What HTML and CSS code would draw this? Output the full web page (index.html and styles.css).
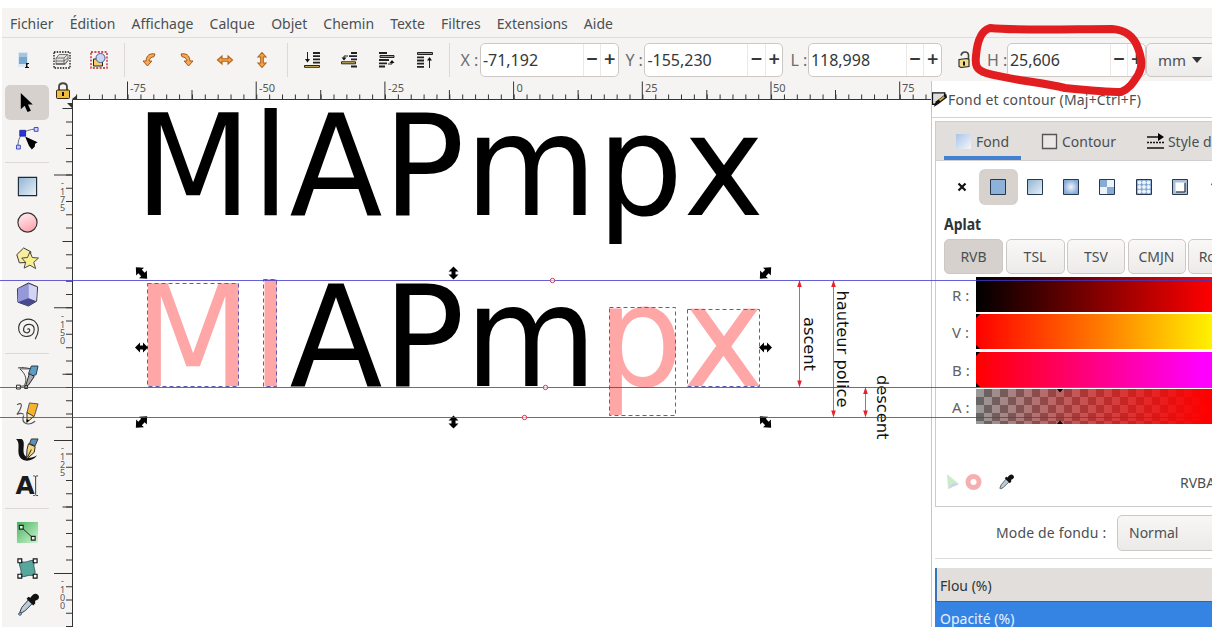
FILE: index.html
```
<!DOCTYPE html>
<html lang="fr">
<head>
<meta charset="utf-8">
<title>Inkscape</title>
<link rel="stylesheet" href="styles.css">
</head>
<body>
<div class="app">
<nav class="menubar">
<span class="t">Fichier</span><span class="t">Édition</span><span class="t">Affichage</span><span class="t">Calque</span><span class="t">Objet</span><span class="t">Chemin</span><span class="t">Texte</span><span class="t">Filtres</span><span class="t">Extensions</span><span class="t">Aide</span>
</nav>
<div class="toolbar">
<div class="icons first">
<svg viewBox="0 0 24 24"><path d="M6 4h10v15H6z" fill="#d9e8f4"/><path d="M7 5h8v11H7z" fill="#79a8cf"/><path d="M7 5h8v4H7z" fill="#a6c6e0"/><path d="M13 15h4v1h-1l-1 1.500 1 1.500h1v1h-4v-1h1v-4h-1z" fill="#111"/></svg>
<svg viewBox="0 0 24 24"><path d="M4 4h16v16H4z" fill="none" stroke="#111" stroke-width="1.300" stroke-dasharray="1.500 1.200"/><path d="M9 6.500h9v6l-3 4H6v-6z" fill="#e4e4e4" stroke="#777"/><path d="M6 10h8l3-3M6 13h8l4-3M6 15.500h9l3-3M14 10v6" fill="none" stroke="#555" stroke-width=".8"/></svg>
<svg viewBox="0 0 24 24"><path d="M4 4h16v16H4z" fill="none" stroke="#c01824" stroke-width="1.300" stroke-dasharray="2 1.400"/><path d="M6.500 11h9v7h-9z" fill="#f3cf63" stroke="#222"/><circle cx="13.500" cy="10" r="4.500" fill="#c8d8f4" stroke="#4b5d94"/></svg>
</div>
<i class="sep s1"></i>
<div class="icons">
<svg viewBox="0 0 24 24"><path id="rot" d="M18 6c-5-1-8.500 1-9 7H6l4.500 5 4.300-5H12c.5-2.500 2-4 5-4.300z" fill="#f2a75a" stroke="#a65a18" stroke-width="1"/></svg>
<svg viewBox="0 0 24 24"><use href="#rot" transform="matrix(-1 0 0 1 24 0)"/></svg>
<svg viewBox="0 0 24 24"><path id="flip" d="M4.500 12l4.500-4v2.700h6V8l4.500 4-4.500 4v-2.700H9V16z" fill="#f7a347" stroke="#b0641d" stroke-width="1.100"/></svg>
<svg viewBox="0 0 24 24"><use href="#flip" transform="rotate(90 12 12)"/></svg>
</div>
<i class="sep"></i>
<div class="icons">
<svg viewBox="0 0 24 24"><path d="M13 5h7M13 8.200h7M13 11.400h7M13 14.600h7" stroke="#222" stroke-width="1.800"/><path d="M7.500 4v10" stroke="#222"/><path d="M5 11h5l-2.500 3.500z" fill="#111"/><path d="M4.500 17.500h15v1.800h-15z" fill="#e8c562" stroke="#222" stroke-width="1"/></svg>
<svg viewBox="0 0 24 24"><path d="M14 5h6M12 8.200h8M14 11.400h6M14 18.500h6" stroke="#222" stroke-width="1.800"/><path d="M4.500 13.800h14v2h-14z" fill="#e8c562" stroke="#222"/><path d="M11 8H7v3" fill="none" stroke="#222"/><path d="M4.500 9.500h5L7 12.500z" fill="#111"/></svg>
<svg viewBox="0 0 24 24"><path d="M4 5h8M4 12h10M4 15.300h8M4 18.500h6" stroke="#222" stroke-width="1.800"/><path d="M5 7.500h14v2H5z" fill="#999" stroke="#222"/><path d="M13 16h4v-3" fill="none" stroke="#222"/><path d="M14.500 15h5L17 12z" fill="#111"/></svg>
<svg viewBox="0 0 24 24"><path d="M4.500 4.500h15v2h-15z" fill="#999" stroke="#222"/><path d="M4 9.300h7M4 12.500h7M4 15.700h7M4 18.900h7" stroke="#222" stroke-width="1.800"/><path d="M16.500 10v10" stroke="#222"/><path d="M14 12.500h5L16.500 9z" fill="#111"/></svg>
</div>
<i class="sep"></i>
<label class="lx">X :</label><div class="spin"><span>-71,192</span><b>−</b><b>+</b></div>
<label class="ly">Y :</label><div class="spin"><span>-155,230</span><b>−</b><b>+</b></div>
<label class="ll">L :</label><div class="spin short"><span>118,998</span><b>−</b><b>+</b></div>
<svg class="lock" viewBox="0 0 16 20"><path d="M5 5.500C6 1 12 1 12.500 5v4" fill="none" stroke="#444" stroke-width="1.600"/><path d="M3 9.500l8-1 2 1v7l-8 1-2-1z" fill="#f2dc88" stroke="#222" stroke-width="1.100"/><path d="M8 11.500v4" stroke="#111" stroke-width="2"/></svg>
<label class="lh">H :</label><div class="spin"><span>25,606</span><b>−</b><b>+</b></div>
<div class="unit"><span>mm</span><i></i></div>
</div>
<div class="main">
<aside class="toolbox">
<div class="tool on"><svg viewBox="0 0 24 24"><path d="M5 2v17l4-3.500 3 6.500 3.500-1.500-3-6.500h5z" fill="#000"/></svg></div>
<div class="tool"><svg viewBox="0 0 24 24"><path d="M2 21C2 9 7 3 21 2" fill="none" stroke="#666"/><path d="M4 3.500h6v6H4z" fill="#2c35cf" stroke="#2227a8"/><path d="M19 .5h4v4h-4zM.5 19h4v4h-4z" fill="#cdd1fa" stroke="#3b43cc"/><path d="M9.500 10l13 6-2.500 1.500-.5 3-3 3-3-4z" fill="#000"/></svg></div>
<i class="hs"></i>
<div class="tool"><svg viewBox="0 0 24 24"><defs><linearGradient id="bl" x2="1" y2="1"><stop stop-color="#8fb4d4"/><stop offset="1" stop-color="#e9f1f8"/></linearGradient><linearGradient id="pk" x2=".4" y2="1"><stop stop-color="#fff3f3"/><stop offset="1" stop-color="#ffa8b4"/></linearGradient></defs><path d="M2.500 2.500h19v19h-19z" fill="url(#bl)" stroke="#1c2a38" stroke-width="1.200"/></svg></div>
<div class="tool"><svg viewBox="0 0 24 24"><circle cx="12" cy="12" r="10" fill="url(#pk)" stroke="#333" stroke-width="1.200"/></svg></div>
<div class="tool"><svg viewBox="0 0 24 24"><path d="M.8 8L8 1l7.500 4-1.500 11-10.500.5z" fill="#f8eda0" stroke="#333"/><path d="M14.500 5l2.500 6 6.500.5-5 4.500 2 6.500-6-3.500-6 3 1.500-6-4-4.500 6-.5z" fill="#faef90" stroke="#444"/></svg></div>
<div class="tool"><svg viewBox="0 0 24 24"><path d="M1.500 6L13 0l9.500 4-1 15L13 24 2 20z" fill="#7a7dcd" stroke="#333"/><path d="M13 1v15l8 3 1-14.500z" fill="#d3d4f2"/><path d="M2 6l11-5v15L2 20z" fill="#9698da"/><path d="M2 20l11-4 8 3-8 4.500z" fill="#474a91"/></svg></div>
<div class="tool"><svg viewBox="0 0 24 24"><path d="M12 12c1-2 3 0 2 2-2 3-7 1-6-3 1-6 11-6 11 1 0 9-14 10-16 1C1 2 13-1 19 3c6 5 5 13 1 19" fill="none" stroke="#333" stroke-width="1.200"/></svg></div>
<i class="hs thin"></i>
<div class="tool"><svg viewBox="0 0 24 24"><path d="M2 2c6-1 8 0 14 1L4 3c7 6 8 13 4 18H2" fill="none" stroke="#444"/><path d="M.5 20h4v4h-4zM9 20.500h3v3H9z" fill="#fff" stroke="#222"/><path d="M16 0h7l-2 9-6 2-2-3z" fill="#5d9cc4" stroke="#283c4a"/><path d="M14 8l5 3-6 9-3 1z" fill="#aaa" stroke="#222"/></svg></div>
<div class="tool"><svg viewBox="0 0 24 24"><path d="M1 3c8-5 4 5 0 10 3-2 6-1 7 0M8 14c-3 8 4 12 12 6" fill="none" stroke="#555" stroke-width="1.200"/><path d="M14 1l9 1-4 13-7 5 .5-1-1-8z" fill="#f7b22f" stroke="#555"/><path d="M11.500 11l7 4-7 6z" fill="#f8eab8" stroke="#333"/><path d="M11 18l3 1-3 3z"/></svg></div>
<div class="tool"><svg viewBox="0 0 24 24"><path d="M0 1h6c5 3-1 14 4 18 4 3 8 1 12-1-4 6-12 7-16 4C-1 16 6 6 0 1z" fill="#111"/><path d="M16 1h7l-3 7-6-2z" fill="#5d91b9" stroke="#333"/><path d="M13 6l7 3-1 6-8 7 .500-10z" fill="#f4d77c" stroke="#222"/><path d="M12 20l4-8" stroke="#222"/></svg></div>
<div class="tool"><svg viewBox="0 0 24 24"><text x="-.5" y="20.500" class="aicon" textLength="20" lengthAdjust="spacingAndGlyphs">A</text><path d="M18 2c2 0 2 0 2.500 1C21 2 21 2 23 2M20.500 3v18M18 22.500c2 0 2 0 2.500-1 .5 1 .5 1 2.500 1" fill="none" stroke="#333"/></svg></div>
<i class="hs"></i>
<div class="tool"><svg viewBox="0 0 24 24"><defs><linearGradient id="gr" x2="1" y2="1"><stop stop-color="#45b45c"/><stop offset="1" stop-color="#d3f3d6"/></linearGradient></defs><path d="M1 1h22v22H1z" fill="url(#gr)"/><path d="M6 7l12 11" stroke="#222"/><path d="M3.500 4.500h4v4h-4zM16 16h4v4h-4z" fill="#e5f5e5" stroke="#222" stroke-width="1.200"/></svg></div>
<div class="tool"><svg viewBox="0 0 24 24"><path d="M4 4c6 4 10-2 16 0-4 7 2 9-1 16-6-3-9 2-15 0 4-6-2-10 0-16z" fill="#58a79c" stroke="#2f5c66"/><path d="M2 2h4v4H2zM18 2h4v4h-4zM18 18h4v4h-4zM2 18h4v4H2z" fill="#fff" stroke="#111" stroke-width="1.200"/></svg></div>
<div class="tool"><svg viewBox="0 0 24 24"><g id="drop"><path d="M13 7l4 4-8 8-4 2-1-1 2-5z" fill="#b8cbd9" stroke="#333"/><path d="M11 6l2-2 2 1c3-5 6-5 8-3s1 5-3 6l0 3-2 2z" fill="#111"/></g><path d="M5 20c3 4-4 4-2 1z" fill="#7fb0d8" stroke="#357"/></svg></div>
</aside>
<svg class="canvas" width="877" height="546" viewBox="54 81 877 546">
<rect x="54" y="81" width="877" height="546" fill="#f5f4f2"/>
<rect x="72" y="99" width="859" height="528" fill="#fff"/>
<g stroke="#333" fill="none">
<path d="M72.500 627V99.500H931"/>
<path d="M76 97H931" stroke-width="5" stroke-dasharray="1 11.870" stroke-dashoffset="-.1"/>
<path d="M191.500 94.500H931" stroke-width="9" stroke-dasharray="1 127.700"/>
<path d="M127 90.500H931" stroke-width="18" stroke-dasharray="1 127.700"/>
<path d="M69 108.100V627" stroke-width="6" stroke-dasharray="1 12.280"/>
<path d="M67.500 108.100V627" stroke-width="10" stroke-dasharray="1 131.800"/>
<path d="M63 174.500V627" stroke-width="18" stroke-dasharray="1 131.800"/>
</g>
<path d="M72 99l5-4v5zM67 103h5v5z" fill="#333"/>
<path d="M59 90v-3c0-5 8-5 8 0v3" fill="none" stroke="#444" stroke-width="1.800"/><rect x="56.500" y="90" width="13" height="8.500" rx="1" fill="#f0bd3d" stroke="#33250f"/><path d="M63 92v4" stroke="#111" stroke-width="2"/>
<g class="rl">
<text x="130" y="92">-75</text><text x="259" y="92">-50</text><text x="388" y="92">-25</text><text x="516.500" y="92">0</text><text x="645" y="92">25</text><text x="773" y="92">50</text><text x="902" y="92">75</text>
</g>
<g class="vl">
<text><tspan x="61" y="186">-</tspan><tspan x="60" y="194.500">1</tspan><tspan x="60" y="203">7</tspan><tspan x="60" y="211">5</tspan></text>
<text><tspan x="61" y="319">-</tspan><tspan x="60" y="327.500">1</tspan><tspan x="60" y="336">5</tspan><tspan x="60" y="344">0</tspan></text>
<text><tspan x="61" y="451">-</tspan><tspan x="60" y="459.500">1</tspan><tspan x="60" y="468">2</tspan><tspan x="60" y="476">5</tspan></text>
<text><tspan x="61" y="584">-</tspan><tspan x="60" y="592.500">1</tspan><tspan x="60" y="601">0</tspan><tspan x="60" y="609">0</tspan></text>
</g>
<g class="big">
<text transform="translate(134.500 215.300) scale(1 1.033)">MlAPmpx</text>
<text transform="translate(134.500 386.300) scale(1 1.033)"><tspan class="pk">Ml</tspan>APm<tspan class="pk">px</tspan></text>
</g>
<g fill="none" stroke="#5f5cae" stroke-dasharray="4 3"><path d="M147.500 283.500h91v103h-91zM263.500 279.500h13v107h-13zM609.500 307.500h66v108h-66zM687.500 309.500h72v77h-72z"/></g>
<defs><path id="ar" d="M-6.500 0l5-5v3h3v-3l5 5-5 5V2h-3v3z"/><path id="dg" d="M-8 0l6-5.500v3h4v-3L8 0 2 5.500v-3h-4v3z"/></defs>
<use href="#dg" transform="translate(141.500 273) rotate(45)"/><use href="#dg" transform="translate(765.500 273) rotate(-45)"/><use href="#dg" transform="translate(141.500 422) rotate(-45)"/><use href="#dg" transform="translate(765.500 422) rotate(45)"/>
<use href="#ar" transform="translate(453.500 273) rotate(90)"/><use href="#ar" transform="translate(453.500 422) rotate(90)"/><use href="#ar" x="141.500" y="347.500"/><use href="#ar" x="765.500" y="347.500"/>
<g stroke="#ee5555"><path d="M799.500 282v104M833.500 282v134M865.500 389v27"/></g>
<path fill="#e3232a" d="M799.500 280l2.300 7h-4.600zM833.500 280l2.300 7h-4.600zM865.500 387l2.300 7h-4.600zM799.500 387.500l2.300-7h-4.600zM833.500 417.500l2.300-7h-4.600zM865.500 417.500l2.300-7h-4.600z"/>
<g class="note">
<text transform="translate(804 317) rotate(90)" textLength="54">ascent</text>
<text transform="translate(837 290.500) rotate(90)" textLength="117">hauteur police</text>
<text transform="translate(877 375) rotate(90)" textLength="64.500">descent</text>
</g>
</svg>
<section class="panel">
<header><svg viewBox="0 0 18 18"><path d="M1.500 2h13v3l-9 9h-4z" fill="#ddd" stroke="#111" stroke-width="1.500"/><path d="M16 3l1 4-8 6-6 4 2-6z" fill="#111"/><path d="M9 10l5-4" stroke="#d9a33a" stroke-width="2"/></svg><span class="t">Fond et contour (Maj+Ctrl+F)</span></header>
<div class="book">
<div class="tabs">
<div class="tab cur"><svg viewBox="0 0 17 17"><defs><linearGradient id="fd" x2="1" y2="1"><stop stop-color="#a9c4e8"/><stop offset="1" stop-color="#f5f6f9"/></linearGradient></defs><path d="M1 1h15v15H1z" fill="url(#fd)"/></svg><span class="t">Fond</span></div>
<div class="tab c2"><svg viewBox="0 0 17 17"><path d="M1.500 1.500h14v14h-14z" fill="#eae7e5" stroke="#555" stroke-width="1.300"/></svg><span class="t">Contour</span></div>
<div class="tab c3"><svg viewBox="0 0 17 17"><path d="M0 4h13M0 15h17" stroke="#111" stroke-width="1.600"/><path d="M0 9.500h17" stroke="#111" stroke-width="1.500" stroke-dasharray="2 1"/><path d="M11 0l6 4-6 4z"/></svg><span class="t">Style du contour</span></div>
</div>
<div class="paints">
<span><svg viewBox="0 0 18 18"><path d="M5.500 5.500l7 7M12.500 5.500l-7 7" stroke="#111" stroke-width="2.200"/></svg></span>
<span class="sel"><svg viewBox="0 0 18 18"><path d="M1.500 1.500h15v15h-15z" fill="#8eb1da" stroke="#26384f"/></svg></span>
<span><svg viewBox="0 0 18 18"><path d="M1.500 1.500h15v15h-15z" fill="url(#bl)" stroke="#26384f"/></svg></span>
<span><svg viewBox="0 0 18 18"><defs><radialGradient id="rd"><stop stop-color="#f2f6fc"/><stop offset="1" stop-color="#85abd8"/></radialGradient></defs><path d="M1.500 1.500h15v15h-15z" fill="url(#rd)" stroke="#26384f"/></svg></span>
<span><svg viewBox="0 0 18 18"><path d="M1.500 1.500h15v15h-15z" fill="#eef3fa"/><path d="M2 2h7v7h7v7H9V9H2z" fill="#88abd2"/><path d="M1.500 1.500h15v15h-15z" fill="none" stroke="#26384f"/></svg></span>
<span><svg viewBox="0 0 18 18"><path d="M1.500 1.500h15v15h-15z" fill="#7fa5d0" stroke="#26384f"/><g fill="#edf3fb"><circle cx="4.500" cy="4.500" r="2"/><circle cx="9" cy="4.500" r="2"/><circle cx="13.500" cy="4.500" r="2"/><circle cx="4.500" cy="9" r="2"/><circle cx="9" cy="9" r="2"/><circle cx="13.500" cy="9" r="2"/><circle cx="4.500" cy="13.500" r="2"/><circle cx="9" cy="13.500" r="2"/><circle cx="13.500" cy="13.500" r="2"/></g></svg></span>
<span><svg viewBox="0 0 18 18"><path d="M1.500 1.500h15v15h-15z" fill="#a9bfda" stroke="#26384f"/><path d="M4.500 4.500h9v9h-9z" fill="#fff"/><path d="M5 14h9V5" fill="none" stroke="#222"/></svg></span>
<span class="q">?</span>
</div>
<div class="aplat t">Aplat</div>
<div class="modes"><span class="m1"><i class="t">RVB</i></span><span class="m2"><i class="t">TSL</i></span><span class="m3"><i class="t">TSV</i></span><span class="m4"><i class="t">CMJN</i></span><span class="m5"><i class="t">Roue</i></span></div>
<div class="chan"><span>R :</span><div class="r"></div></div>
<div class="chan"><span>V :</span><div class="v"><svg class="mk" viewBox="0 0 6 35"><path d="M0 0h4L0 4zM0 35h4l-4-4z"/></svg></div></div>
<div class="chan"><span>B :</span><div class="b"><svg class="mk" viewBox="0 0 6 35"><path d="M0 0h4L0 4zM0 35h4l-4-4z"/></svg></div></div>
<div class="chan"><span>A :</span><div class="a"><svg class="mk mid" viewBox="0 0 6 35"><path d="M0 0h6L3 3.500zM0 35h6l-3-3.500z"/></svg></div></div>
<div class="foot"><svg class="cms" viewBox="0 0 38 18"><path d="M2 1l12 10L3 16z" fill="#cbeccb"/><path d="M3 16l5-6 6 1z" fill="#d0cdf5"/><circle cx="28.500" cy="9" r="5.500" fill="none" stroke="#f4b0b0" stroke-width="5"/></svg><svg class="pick" viewBox="0 0 24 24"><use href="#drop"/></svg><span class="t rvba">RVBA :</span></div>
</div>
<div class="blend"><span class="t">Mode de fondu :</span><div class="combo"><span class="t">Normal</span></div></div>
<div class="blur"><span class="t">Flou (%)</span></div>
<div class="opac"><span class="t">Opacité (%)</span></div>
</section>
</div>
<svg class="over" width="1213" height="627" viewBox="0 0 1213 627">
<g stroke="#3d3acb" stroke-width="1" opacity=".8"><path d="M0 280.500h1212M0 387.500h1212M0 417.500h1212"/></g>
<g fill="#fff" fill-opacity=".6" stroke="#d4395a"><circle cx="552.500" cy="280.500" r="2.200"/><circle cx="545.500" cy="387.500" r="2.200"/><circle cx="524.500" cy="417.500" r="2.200"/></g>
<path d="M990 28C1020 31 1075 29 1112 29C1127 30 1134 37 1138 48C1142 59 1143 67 1138 75C1133 83 1129 89 1121 92C1105 92 1085 90 1065 88C1040 82 1010 80 986 73C976 70 975 65 976 56C977 43 980 31 990 28Z" fill="none" stroke="#e21d20" stroke-width="8" stroke-linejoin="round"/>
</svg>
</div>
</body>
</html>
```
FILE: styles.css
```
* { box-sizing: border-box; }
body { margin: 0; background: #fff; font-family: "Noto Sans", sans-serif; font-size: 14px; color: #4b4f51; overflow: hidden; }
.app { position: relative; width: 1212px; height: 627px; padding: 8px 0 0 2px; overflow: hidden; }
.t { display: inline-block; white-space: nowrap; font-style: normal; transform: scaleY(1.08); }
.menubar { height: 30px; display: flex; align-items: center; gap: 16.100px; padding: 1px 0 0 8px; background: #f5f4f3; border-bottom: 1px solid #dfdcda; }
.toolbar { height: 43px; display: flex; align-items: center; background: #f5f4f2; }
.toolbar > * { flex: none; }
.icons { display: flex; gap: 13.800px; margin-left: 12px; }
.icons.first { margin-left: 10px; gap: 13.500px; }
.icons svg { width: 24px; height: 24px; }
.sep { width: 1px; height: 34px; background: #dcd9d6; margin-left: 12.300px; }
.sep.s1 { margin-left: 13px; }
.toolbar label { font-size: 16px; color: #6b6d6e; white-space: nowrap; }
.lx { width: 29.500px; padding-left: 10px; }
.ly { width: 25.500px; padding-left: 6.500px; }
.ll { width: 24.500px; padding-left: 7px; }
.lh { width: 35px; padding-left: 15px; }
.spin { width: 139px; height: 34px; display: flex; border: 1px solid #cdc8c4; border-radius: 5px; background: #fff; font-size: 16px; line-height: 32px; color: #333839; }
.spin.short { width: 134px; }
.spin span { flex: 1; padding-left: 2px; }
.spin b { width: 17.500px; border-left: 1px solid #ebe9e7; font-weight: 600; font-size: 20px; text-align: center; line-height: 29px; }
.lock { width: 16px; height: 20px; margin-left: 14px; }
.unit { width: 76px; height: 34px; border: 1px solid #cdc8c4; border-radius: 5px; background: linear-gradient(#f8f7f6, #eeeceb); display: flex; align-items: center; padding-left: 11px; gap: 6px; font-size: 15px; }
.unit i { border: 5px solid transparent; border-top: 6px solid #333; border-bottom: 0; }
.main { height: 546px; display: grid; grid-template-columns: 52px 877px 281px; }
.toolbox { background: #f5f4f2; padding-top: 4px; display: flex; flex-direction: column; align-items: center; }
.tool { flex: none; width: 44px; height: 35.800px; display: flex; align-items: center; justify-content: center; border-radius: 5px; margin-right: 2px; }
.tool.on { height: 35px; margin-bottom: 1px; background: #d6d1cd; }
.tool svg { width: 23px; height: 23px; overflow: visible; }
.hs { flex: none; width: 44px; height: 1px; margin: 5px 2px 6px 0; background: #dcd9d6; }
.hs.thin { margin: 5px 2px 6px 0; }
.aicon { font: bold 25px "DejaVu Sans", sans-serif; fill: #1b1b1b; }
.canvas { display: block; }
.rl { font: 11px "Noto Sans", sans-serif; fill: #555; }
.vl { font: 9px "Noto Sans", sans-serif; fill: #555; }
.big { font: 136px "DejaVu Sans", sans-serif; fill: #000; }
.pk { fill: #ffa6a6; }
.note { font: 16.300px "DejaVu Sans", sans-serif; fill: #111; }
.panel { min-width: 0; overflow: hidden; background: #fff; border-left: 1px solid #c9c6c3; }
.panel header { height: 37px; display: flex; align-items: center; border-bottom: 1px solid #d5d2cf; margin-left: -1px; letter-spacing: .18px; }
.panel header svg { width: 17px; height: 17px; }
.book { margin: 3px 0 0 3px; height: 386px; border: 1px solid #cfcbc8; border-right: 0; overflow: hidden; }
.tabs { height: 39px; display: flex; background: #e1dedb; border-bottom: 1px solid #d2cecb; }
.tab { flex: none; height: 38px; display: flex; align-items: center; gap: 4px; }
.tab svg { width: 17px; height: 17px; }
.cur { width: 77px; margin-left: 8px; padding-left: 11px; border-bottom: 4px solid #4380cf; padding-top: 4px; }
.c2 { margin-left: 20px; }
.c3 { margin-left: 31px; }
.paints { height: 54px; display: flex; align-items: center; padding: 0 0 2px 8px; }
.paints span { flex: none; width: 36.300px; height: 34px; display: flex; align-items: center; justify-content: center; }
.paints svg { width: 18px; height: 18px; }
.paints .sel { border: 1px dashed #aaa39e; outline: 2px solid #d7d2ce; outline-offset: -1px; background: #d7d2ce; border-radius: 5px; }
.paints .q { font-weight: bold; color: #222; padding-right: 4px; }
.aplat { height: 24px; margin-left: 8px; font-weight: bold; line-height: 20px; color: #2e3436; }
.modes { display: flex; gap: 2.500px; margin-left: 8px; height: 35px; }
.modes span { flex: none; height: 35px; border: 1px solid #cdc8c4; border-radius: 5px; background: linear-gradient(#f9f8f7, #edebe9); display: flex; align-items: center; justify-content: center; }
.modes .m1 { width: 59px; background: #d6d1cd; }
.m2 { width: 59px; }
.m3 { width: 58px; }
.m4 { width: 58px; }
.m5 { width: 55px; }
.chan { display: flex; margin-top: 2.500px; height: 35px; font-size: 15px; }
.chan span { width: 40px; padding: 8px 0 0 16px; line-height: 20px; white-space: nowrap; flex: none; color: #606263; }
.chan div { flex: 1; position: relative; }
.r { background: linear-gradient(90deg, #000, #f00); }
.v { background: linear-gradient(90deg, #f00, #ff8000 55%, #fff200); }
.b { background: linear-gradient(90deg, #f00, #f0f 96%); }
.a { background: linear-gradient(90deg, rgba(255,0,0,0), #f00 98%), conic-gradient(#999 25%, #666 0 50%, #999 0 75%, #666 0) 0 -8px / 16px 16px; }
.mk { position: absolute; left: 0; top: 0; width: 6px; height: 35px; }
.mk.mid { left: 81px; }
.foot { height: 40px; margin-top: 38px; display: flex; align-items: center; padding-left: 9px; }
.foot > * { flex: none; }
.cms { width: 38px; height: 18px; }
.pick { width: 17px; height: 17px; margin-left: 14px; }
.foot .rvba { margin-left: 166px; }
.blend { height: 52px; display: flex; align-items: center; padding-left: 65px; border-bottom: 1px solid #dedbd8; margin-left: 3px; }
.blend > span { width: 111px; flex: none; margin-left: -4px; letter-spacing: .15px; }
.combo { flex: none; width: 110px; height: 36px; margin-left: 10px; padding-left: 11px; display: flex; align-items: center; border: 1px solid #cdc8c4; border-radius: 5px; background: linear-gradient(#f8f7f6, #eceae8); }
.blur { height: 33px; margin: 9px 0 0 3px; padding: 8px 0 0 3px; background: #e1dedb; border-left: 2px solid #3776bd; color: #2e3436; line-height: 20px; }
.opac { height: 34px; margin-left: 3px; padding: 7px 0 0 5px; background: #3584e4; border-top: 1px solid #2c68b0; color: #e8f1fc; line-height: 20px; }
.over { position: absolute; left: 0; top: 0; pointer-events: none; }
```
